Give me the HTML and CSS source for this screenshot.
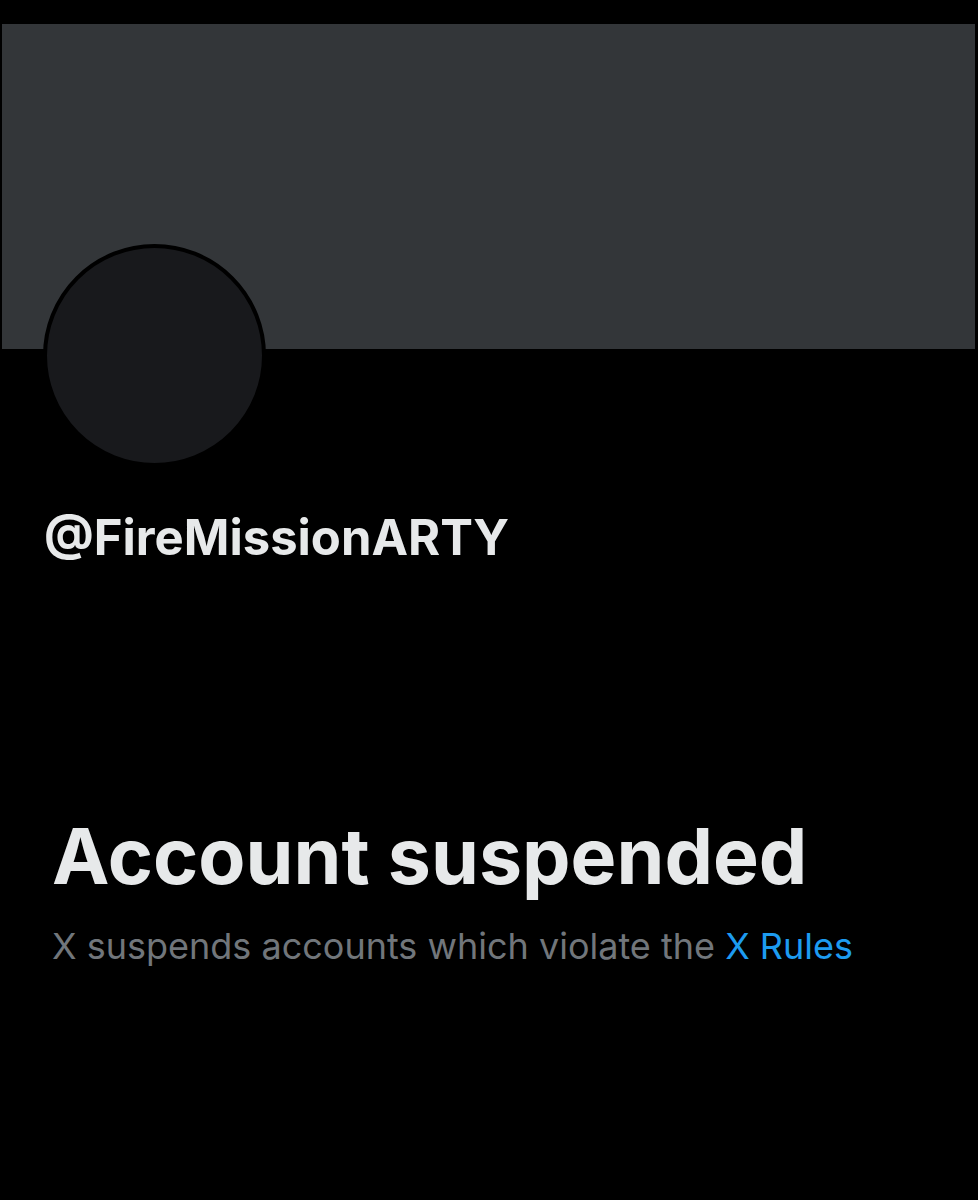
FILE: index.html
```html
<!DOCTYPE html>
<html lang="en">
<head>
    <meta charset="UTF-8">
    <meta name="viewport" content="width=device-width, initial-scale=1.0">
    <title>Account suspended</title>
    <link rel="stylesheet" href="styles.css">
</head>
<body>
    <div class="profile">
        <div class="banner"></div>
        <div class="avatar"></div>
        <h1 class="handle">@FireMissionARTY</h1>
    </div>

    <div class="suspended">
        <h2>Account suspended</h2>
        <p>X suspends accounts which violate the <a href="#">X Rules</a></p>
    </div>
</body>
</html>
```

FILE: styles.css
```css
body {
    font-family: Inter, 'Liberation Sans', sans-serif;
    background-color: #000;
    color: #e7e9ea;
    margin: 0;
    height: 1200px;
}

.profile {
    padding-top: 24px;
}

.banner {
    height: 325px;
    margin: 0 3px 0 2px;
    background-color: #333639;
}

.avatar {
    width: 215px;
    height: 215px;
    margin: -105px 0 0 43px;
    border: 4px solid #000;
    border-radius: 50%;
    background-color: #18191c;
}

.handle {
    margin: 41px 0 0 44px;
    font-size: 49px;
    font-weight: 700;
    line-height: 60px;
}

.suspended {
    padding-left: 52px;
    margin-top: 243px;
}

.suspended h2 {
    margin: 0;
    font-size: 77px;
    font-weight: 700;
    line-height: 90px;
}

.suspended p {
    margin: 23px 0 0;
    font-size: 36px;
    line-height: 44px;
    color: #71767b;
}

.suspended a {
    color: #1d9bf0;
    text-decoration: none;
}
```
